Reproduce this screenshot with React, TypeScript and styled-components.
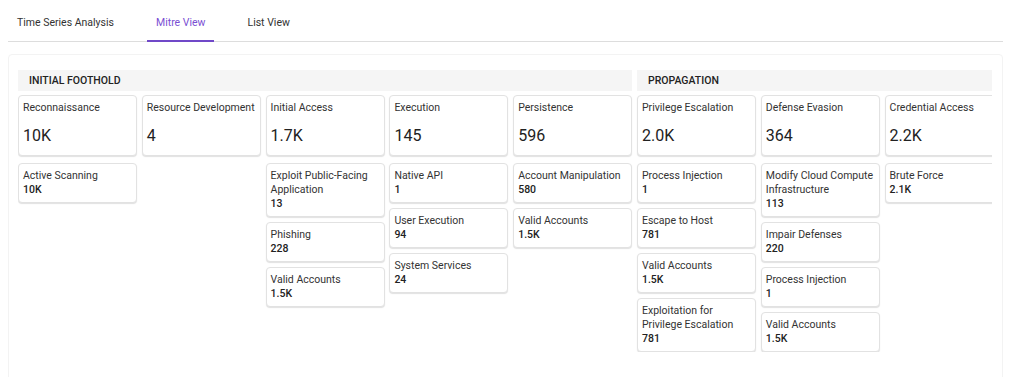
import styled, { createGlobalStyle } from "styled-components";

const GlobalStyle = createGlobalStyle`
  body {
    margin: 0;
    background: #ffffff;
    font-family: Roboto, "Liberation Sans", Arial, sans-serif;
    color: #333333;
  }
`;

type Technique = { name: string; count: string };
type Tactic = { name: string; count: string; techniques: Technique[] };
type Phase = { title: string; tactics: Tactic[] };

const phases: Phase[] = [
  {
    title: "Initial Foothold",
    tactics: [
      {
        name: "Reconnaissance",
        count: "10K",
        techniques: [{ name: "Active Scanning", count: "10K" }],
      },
      { name: "Resource Development", count: "4", techniques: [] },
      {
        name: "Initial Access",
        count: "1.7K",
        techniques: [
          { name: "Exploit Public-Facing Application", count: "13" },
          { name: "Phishing", count: "228" },
          { name: "Valid Accounts", count: "1.5K" },
        ],
      },
      {
        name: "Execution",
        count: "145",
        techniques: [
          { name: "Native API", count: "1" },
          { name: "User Execution", count: "94" },
          { name: "System Services", count: "24" },
        ],
      },
      {
        name: "Persistence",
        count: "596",
        techniques: [
          { name: "Account Manipulation", count: "580" },
          { name: "Valid Accounts", count: "1.5K" },
        ],
      },
    ],
  },
  {
    title: "Propagation",
    tactics: [
      {
        name: "Privilege Escalation",
        count: "2.0K",
        techniques: [
          { name: "Process Injection", count: "1" },
          { name: "Escape to Host", count: "781" },
          { name: "Valid Accounts", count: "1.5K" },
          { name: "Exploitation for Privilege Escalation", count: "781" },
        ],
      },
      {
        name: "Defense Evasion",
        count: "364",
        techniques: [
          { name: "Modify Cloud Compute Infrastructure", count: "113" },
          { name: "Impair Defenses", count: "220" },
          { name: "Process Injection", count: "1" },
          { name: "Valid Accounts", count: "1.5K" },
        ],
      },
      {
        name: "Credential Access",
        count: "2.2K",
        techniques: [{ name: "Brute Force", count: "2.1K" }],
      },
    ],
  },
];

const tabs = ["Time Series Analysis", "Mitre View", "List View"];

const Page = styled.div`
  width: 995px;
  margin-left: 8px;
`;

const TabBar = styled.div`
  display: flex;
  gap: 24px;
  height: 41px;
  border-bottom: 1px solid #dddddd;
`;

const Tab = styled.div<{ $active?: boolean }>`
  position: relative;
  display: flex;
  align-items: center;
  padding: 4px 9px 0;
  font-size: 10.5px;
  color: ${(p) => (p.$active ? "#7a4fd3" : "#333333")};
  &::after {
    content: "";
    display: ${(p) => (p.$active ? "block" : "none")};
    position: absolute;
    left: 0;
    right: 0;
    bottom: -1px;
    height: 2px;
    background: #7048c8;
  }
`;

const Panel = styled.div`
  margin-top: 12px;
  padding: 15px 10px 20px 9px;
  border: 1px solid #f3f3f3;
  border-radius: 4px;
  height: 300px;
`;

const Scroller = styled.div`
  display: flex;
  gap: 4.8px;
  overflow: hidden;
`;

const PhaseBlock = styled.div`
  display: flex;
  flex-direction: column;
  gap: 4px;
  flex-shrink: 0;
`;

const PhaseHeader = styled.div`
  height: 21px;
  display: flex;
  align-items: center;
  padding-left: 11px;
  background: #f5f5f5;
  font-size: 10.5px;
  font-weight: 500;
  text-transform: uppercase;
  color: #222222;
`;

const Columns = styled.div`
  display: flex;
  gap: 4.8px;
`;

const Column = styled.div`
  width: 119px;
  display: flex;
  flex-direction: column;
  flex-shrink: 0;
`;

const Card = styled.div`
  background: #ffffff;
  border: 1px solid #e2e2e2;
  border-radius: 4px;
  box-shadow: 0 1px 1px rgba(0, 0, 0, 0.12);
`;

const TacticCard = styled(Card)`
  height: 61px;
  box-sizing: border-box;
  padding: 4px 2px 4px 4px;
`;

const TacticName = styled.div`
  font-size: 10.5px;
  line-height: 15px;
  color: #333333;
  white-space: nowrap;
`;

const TacticCount = styled.div`
  margin-top: 11px;
  font-size: 16px;
  line-height: 20px;
  color: #222222;
`;

const TechniqueList = styled.div`
  display: flex;
  flex-direction: column;
  gap: 5px;
  margin-top: 7px;
`;

const TechniqueCard = styled(Card)`
  padding: 5px 2px 5px 4px;
`;

const TechniqueName = styled.div`
  font-size: 10.5px;
  line-height: 14px;
  color: #333333;
`;

const TechniqueCount = styled.div`
  font-size: 10.5px;
  font-weight: 500;
  line-height: 14px;
  color: #222222;
`;

export default function App() {
  return (
    <>
      <GlobalStyle />
      <Page>
        <TabBar>
          {tabs.map((t) => (
            <Tab key={t} $active={t === "Mitre View"}>
              {t}
            </Tab>
          ))}
        </TabBar>
        <Panel>
          <Scroller>
            {phases.map((phase) => (
              <PhaseBlock key={phase.title}>
                <PhaseHeader>{phase.title}</PhaseHeader>
                <Columns>
                  {phase.tactics.map((tactic) => (
                    <Column key={tactic.name}>
                      <TacticCard>
                        <TacticName>{tactic.name}</TacticName>
                        <TacticCount>{tactic.count}</TacticCount>
                      </TacticCard>
                      {tactic.techniques.length > 0 && (
                        <TechniqueList>
                          {tactic.techniques.map((tech, i) => (
                            <TechniqueCard key={i}>
                              <TechniqueName>{tech.name}</TechniqueName>
                              <TechniqueCount>{tech.count}</TechniqueCount>
                            </TechniqueCard>
                          ))}
                        </TechniqueList>
                      )}
                    </Column>
                  ))}
                </Columns>
              </PhaseBlock>
            ))}
          </Scroller>
        </Panel>
      </Page>
    </>
  );
}
